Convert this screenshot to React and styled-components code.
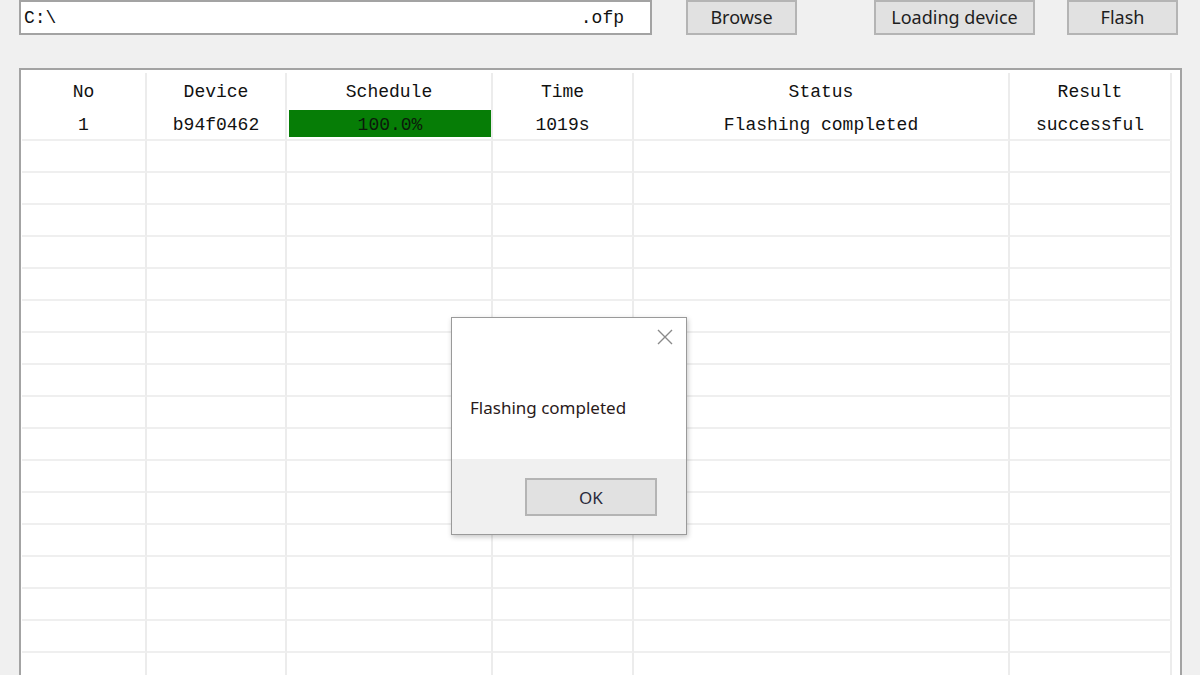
import React from "react";
import styled, { createGlobalStyle } from "styled-components";

const GlobalStyle = createGlobalStyle`
  html, body {
    margin: 0;
    padding: 0;
    background: #f0f0f0;
    overflow: hidden;
  }
  body {
    font-family: "Liberation Mono", "DejaVu Sans Mono", monospace;
  }
`;

const Window = styled.div`
  position: relative;
  width: 1200px;
  height: 675px;
  background: #f0f0f0;
  overflow: hidden;
  padding-left: 19px;
  box-sizing: border-box;
`;

const Toolbar = styled.div`
  display: flex;
  align-items: flex-start;
  height: 35px;
`;

const PathField = styled.div`
  display: flex;
  align-items: center;
  justify-content: space-between;
  box-sizing: border-box;
  width: 633px;
  height: 35px;
  padding: 1px 26px 0 3px;
  background: #ffffff;
  border: 2px solid #a3a3a3;
  font-family: "Liberation Mono", monospace;
  font-size: 18px;
  color: #111;
`;

const Button = styled.button`
  box-sizing: border-box;
  height: 35px;
  width: ${(p) => p.$w}px;
  margin-left: ${(p) => p.$gap}px;
  padding: 0 0 2px;
  background: #e1e1e1;
  border: 2px solid #b4b4b4;
  font-family: "Noto Sans", "Open Sans", sans-serif;
  font-size: 18px;
  color: #1e1e1e;
  line-height: 1;
`;

const TableFrame = styled.div`
  margin-top: 33px;
  width: 1163px;
  height: 620px;
  box-sizing: border-box;
  border: 2px solid #a3a3a3;
  border-bottom: none;
  background: #ffffff;
  padding-left: 1px;
  overflow: hidden;
`;

const Grid = styled.div`
  display: grid;
  grid-template-columns: 125px 140px 206px 141px 376px 162px;
  grid-template-rows: 34px 34px;
  grid-auto-rows: 32px;
  margin-top: 3px;
`;

const Cell = styled.div`
  display: flex;
  align-items: center;
  justify-content: center;
  box-sizing: border-box;
  padding-top: 3px;
  border-right: 2px solid #ececec;
  border-bottom: ${(p) => (p.$ruled ? "2px solid #efefef" : "none")};
  font-family: "Liberation Mono", monospace;
  font-size: 18px;
  color: #111;
  white-space: pre;
`;

const ProgressCell = styled(Cell)`
  align-items: stretch;
  padding: 3px 0 2px 2px;
`;

const Progress = styled.div`
  display: flex;
  align-items: center;
  justify-content: center;
  flex: 1;
  padding-top: 2px;
  background: #067d06;
  color: #0b1a0b;
  font-family: "Liberation Mono", monospace;
  font-size: 18px;
`;

const Dialog = styled.div`
  position: absolute;
  left: 451px;
  top: 317px;
  width: 236px;
  height: 218px;
  box-sizing: border-box;
  display: flex;
  flex-direction: column;
  background: #ffffff;
  border: 1px solid #9a9a9a;
  box-shadow: 1px 2px 5px rgba(0, 0, 0, 0.22);
  font-family: "Noto Sans", "Open Sans", sans-serif;
`;

const CloseBtn = styled.div`
  align-self: flex-end;
  margin: 10px 12px 0 0;
  width: 18px;
  height: 18px;
`;

const Message = styled.div`
  flex: 1;
  padding: 50px 0 0 18px;
  font-size: 17px;
  color: #2a1a1a;
`;

const DialogFooter = styled.div`
  display: flex;
  justify-content: flex-end;
  height: 75px;
  box-sizing: border-box;
  padding: 19px 29px 0 0;
  background: #f0f0f0;
`;

const OkButton = styled.button`
  box-sizing: border-box;
  width: 132px;
  height: 38px;
  padding: 0;
  background: #e1e1e1;
  border: 2px solid #b4b4b4;
  font-family: "Noto Sans", "Open Sans", sans-serif;
  font-size: 17px;
  color: #2a2a3a;
`;

const columns = ["No", "Device", "Schedule", "Time", "Status", "Result"];
const EMPTY_ROWS = 18;

export default function App() {
  return (
    <>
      <GlobalStyle />
      <Window>
        <Toolbar>
          <PathField>
            <span>C:\</span>
            <span>.ofp</span>
          </PathField>
          <Button $w={111} $gap={34}>Browse</Button>
          <Button $w={161} $gap={77}>Loading device</Button>
          <Button $w={111} $gap={32}>Flash</Button>
        </Toolbar>

        <TableFrame>
          <Grid>
            {columns.map((c) => (
              <Cell key={c}>{c}</Cell>
            ))}
            <Cell $ruled>1</Cell>
            <Cell $ruled>b94f0462</Cell>
            <ProgressCell $ruled>
              <Progress>100.0%</Progress>
            </ProgressCell>
            <Cell $ruled>1019s</Cell>
            <Cell $ruled>Flashing completed</Cell>
            <Cell $ruled>successful</Cell>
            {Array.from({ length: EMPTY_ROWS * columns.length }).map((_, i) => (
              <Cell key={i} $ruled />
            ))}
          </Grid>
        </TableFrame>

        <Dialog>
          <CloseBtn>
            <svg width="18" height="18" viewBox="0 0 18 18">
              <path
                d="M2 2 L16 16 M16 2 L2 16"
                stroke="#8a8a8a"
                strokeWidth="1.4"
                fill="none"
              />
            </svg>
          </CloseBtn>
          <Message>Flashing completed</Message>
          <DialogFooter>
            <OkButton>OK</OkButton>
          </DialogFooter>
        </Dialog>
      </Window>
    </>
  );
}
